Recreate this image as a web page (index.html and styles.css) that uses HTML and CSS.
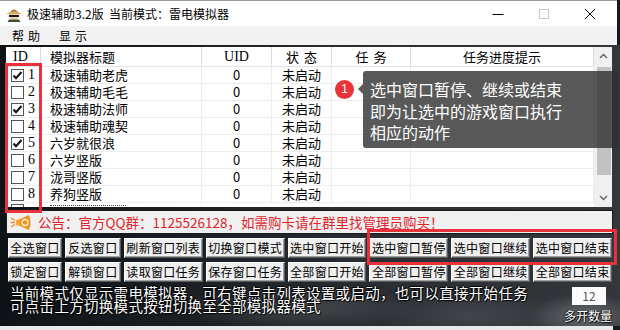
FILE: index.html
```html
<!DOCTYPE html>
<html lang="zh-CN">
<head>
<meta charset="utf-8">
<title>极速辅助3.2版</title>
<link rel="stylesheet" href="styles.css">
</head>
<body>
<div class="win">
  <div class="titlebar">
    <svg class="appicon" width="16" height="16" viewBox="0 0 16 16">
      <path d="M4 6.5 Q8 0 12 6.5 Z" fill="#a8803e"/>
      <path d="M0.5 7.5 Q8 3.5 15.5 7.5 L13 8.5 L3 8.5 Z" fill="#d2aa62"/>
      <rect x="4" y="8.5" width="8" height="5" fill="#f2d3a4"/>
      <rect x="3" y="9" width="10" height="2" fill="#151515"/>
      <path d="M3 13.5 L13 13.5 L14.5 16 L1.5 16 Z" fill="#3d5232"/>
    </svg>
    <span class="apptitle">极速辅助3.2版&nbsp;&nbsp;当前模式：雷电模拟器</span>
    <div class="ctrls">
      <span class="ctrl"><svg width="12" height="12" viewBox="0 0 12 12"><path d="M0.5 6.5 H11.5" stroke="#000" stroke-width="1"/></svg></span>
      <span class="ctrl"><svg width="12" height="12" viewBox="0 0 12 12"><rect x="1.5" y="1.5" width="9" height="9" fill="none" stroke="#c4c4c4" stroke-width="1"/></svg></span>
      <span class="ctrl"><svg width="12" height="12" viewBox="0 0 12 12"><path d="M1 1 L11 11 M11 1 L1 11" stroke="#000" stroke-width="1"/></svg></span>
    </div>
  </div>
  <div class="menubar">
    <span class="menuitem">帮助</span>
    <span class="menuitem">显示</span>
  </div>
  <div class="client">
    <div class="list">
      <div class="table">
        <div class="row head">
          <div class="cell c-id"><span class="ser">ID</span></div>
          <div class="cell c-title">模拟器标题</div>
          <div class="cell c-center ser">UID</div>
          <div class="cell c-center sp">状态</div>
          <div class="cell c-center sp">任务</div>
          <div class="cell c-center">任务进度提示</div>
        </div>
        <div class="row"><div class="cell c-id"><span class="cb on"><svg width="11" height="11" viewBox="0 0 11 11"><path d="M1.5 5.5 L4 8.2 L9.5 2" fill="none" stroke="#111" stroke-width="2"/></svg></span><span class="num">1</span></div><div class="cell c-title">极速辅助老虎</div><div class="cell c-center">0</div><div class="cell c-center">未启动</div><div class="cell"></div><div class="cell"></div></div>
        <div class="row"><div class="cell c-id"><span class="cb"></span><span class="num">2</span></div><div class="cell c-title">极速辅助毛毛</div><div class="cell c-center">0</div><div class="cell c-center">未启动</div><div class="cell"></div><div class="cell"></div></div>
        <div class="row"><div class="cell c-id"><span class="cb on"><svg width="11" height="11" viewBox="0 0 11 11"><path d="M1.5 5.5 L4 8.2 L9.5 2" fill="none" stroke="#111" stroke-width="2"/></svg></span><span class="num">3</span></div><div class="cell c-title">极速辅助法师</div><div class="cell c-center">0</div><div class="cell c-center">未启动</div><div class="cell"></div><div class="cell"></div></div>
        <div class="row"><div class="cell c-id"><span class="cb"></span><span class="num">4</span></div><div class="cell c-title">极速辅助魂契</div><div class="cell c-center">0</div><div class="cell c-center">未启动</div><div class="cell"></div><div class="cell"></div></div>
        <div class="row"><div class="cell c-id"><span class="cb on"><svg width="11" height="11" viewBox="0 0 11 11"><path d="M1.5 5.5 L4 8.2 L9.5 2" fill="none" stroke="#111" stroke-width="2"/></svg></span><span class="num">5</span></div><div class="cell c-title">六岁就很浪</div><div class="cell c-center">0</div><div class="cell c-center">未启动</div><div class="cell"></div><div class="cell"></div></div>
        <div class="row"><div class="cell c-id"><span class="cb"></span><span class="num">6</span></div><div class="cell c-title">六岁竖版</div><div class="cell c-center">0</div><div class="cell c-center">未启动</div><div class="cell"></div><div class="cell"></div></div>
        <div class="row"><div class="cell c-id"><span class="cb"></span><span class="num">7</span></div><div class="cell c-title">泷哥竖版</div><div class="cell c-center">0</div><div class="cell c-center">未启动</div><div class="cell"></div><div class="cell"></div></div>
        <div class="row"><div class="cell c-id"><span class="cb"></span><span class="num">8</span></div><div class="cell c-title">养狗竖版</div><div class="cell c-center">0</div><div class="cell c-center">未启动</div><div class="cell"></div><div class="cell"></div></div>
        <div class="row partial"><div class="cell c-id"><span class="cb"></span></div><div class="cell c-title"><span class="stub"></span></div><div class="cell"></div><div class="cell"></div><div class="cell"></div><div class="cell"></div></div>
      </div>
      <div class="vscroll">
        <div class="sarrow"><svg width="9" height="6" viewBox="0 0 9 6"><path d="M1 5 L4.5 1.5 L8 5" fill="none" stroke="#606060" stroke-width="1.4"/></svg></div>
        <div class="thumb"></div>
        <div class="strack"></div>
        <div class="sarrow"><svg width="9" height="6" viewBox="0 0 9 6"><path d="M1 1 L4.5 4.5 L8 1" fill="none" stroke="#606060" stroke-width="1.4"/></svg></div>
      </div>
    </div>
    <div class="notice">
      <svg class="horn" width="22" height="17" viewBox="0 0 22 17">
        <path d="M1 4 L5 6.5 M0.5 8.5 L5 8.5 M1 13 L5 10.5" stroke="#f08a1c" stroke-width="1.4"/>
        <path d="M9 5.5 L19 1 Q22 8.5 19 16 L9 11.5 Z" fill="#f2921e"/>
        <rect x="6" y="5.5" width="4" height="6" rx="1" fill="#f7a63a"/>
        <circle cx="15" cy="8.5" r="3" fill="none" stroke="#fff3d0" stroke-width="1.3"/>
      </svg>
      <span class="notice-text">公告：官方QQ群：1125526128，如需购卡请在群里找管理员购买！</span>
    </div>
    <div class="btns">
      <div class="btnrow">
        <button class="btn w-s">全选窗口</button>
        <button class="btn w-m">反选窗口</button>
        <button class="btn">刷新窗口列表</button>
        <button class="btn">切换窗口模式</button>
        <button class="btn">选中窗口开始</button>
        <button class="btn">选中窗口暂停</button>
        <button class="btn">选中窗口继续</button>
        <button class="btn">选中窗口结束</button>
      </div>
      <div class="btnrow">
        <button class="btn w-s">锁定窗口</button>
        <button class="btn w-m">解锁窗口</button>
        <button class="btn">读取窗口任务</button>
        <button class="btn">保存窗口任务</button>
        <button class="btn">全部窗口开始</button>
        <button class="btn">全部窗口暂停</button>
        <button class="btn">全部窗口继续</button>
        <button class="btn">全部窗口结束</button>
      </div>
    </div>
    <div class="footer">
      <div class="hint">
        <div>当前模式仅显示雷电模拟器，可右键点击列表设置或启动，也可以直接开始任务</div>
        <div>可点击上方切换模式按钮切换至全部模拟器模式</div>
      </div>
      <div class="multi">
        <div class="count">12</div>
        <div class="count-label">多开数量</div>
      </div>
    </div>
  </div>
  <div class="bottomstrip"></div>

  <div class="mark mark-id"></div>
  <div class="mark mark-btns"></div>
  <div class="tip-badge">1</div>
  <div class="tip">
    <div class="tip-arrow"></div>
    <div>选中窗口暂停、继续或结束</div>
    <div>即为让选中的游戏窗口执行</div>
    <div>相应的动作</div>
  </div>
</div>
</body>
</html>
```

FILE: styles.css
```css
* { box-sizing: border-box; }

body {
  margin: 0;
  width: 620px;
  height: 330px;
  overflow: hidden;
  background: #15181c;
  font-family: "Noto Sans CJK SC", "Noto Sans", sans-serif;
  color: #000;
}

.win {
  position: relative;
  width: 620px;
  height: 330px;
  display: flex;
  flex-direction: column;
}

/* title bar */
.titlebar {
  height: 26px;
  background: #fff;
  border-top: 1px solid #9a9a9a;
  display: flex;
  align-items: center;
  padding-left: 6px;
  padding-right: 4px;
  margin-right: 3px;
}
.appicon { flex: none; }
.apptitle {
  margin-left: 5px;
  font-size: 12px;
  line-height: 16px;
}
.ctrls {
  margin-left: auto;
  display: flex;
  height: 25px;
}
.ctrl {
  width: 46px;
  display: flex;
  align-items: center;
  justify-content: center;
}

/* menu */
.menubar {
  height: 19px;
  background: #f2f2f2;
  display: flex;
  align-items: center;
  padding-left: 12px;
  margin-right: 3px;
  gap: 15px;
}
.menuitem {
  font-size: 12px;
  letter-spacing: 4px;
  line-height: 16px;
}

/* client area */
.client {
  flex: 1;
  display: flex;
  flex-direction: column;
  padding: 2px 8px 0 6px;
  background:
    radial-gradient(ellipse 70px 30px at 585px 272px, rgba(150,154,158,.55), transparent 80%),
    radial-gradient(ellipse 150px 28px at 300px 262px, rgba(95,98,102,.55), transparent 80%),
    radial-gradient(ellipse 120px 30px at 470px 270px, rgba(80,84,88,.6), transparent 80%),
    linear-gradient(90deg, #0e1317 0%, #1b1f24 30%, #2a2d31 60%, #33363a 100%);
}

.list {
  height: 160px;
  display: flex;
  background: #fff;
  overflow: hidden;
}
.table {
  flex: 1;
  display: flex;
  flex-direction: column;
}
.row {
  display: grid;
  grid-template-columns: 35px 161px 70px 60px 79px 1fr;
  height: 17px;
  flex: none;
  border-bottom: 1px solid #ededed;
  font-size: 13px;
  line-height: 16px;
}
.row.head {
  height: 20px;
  border-bottom: 1px solid #e3e3e3;
}
.row.partial {
  height: 4px;
  border-bottom: 0;
  align-items: end;
}
.row.partial .cell { align-items: flex-end; overflow: hidden; }
.row.partial .cb { height: 3px; border-bottom: 0; }
.stub {
  display: block;
  width: 76px;
  height: 2px;
  border-top: 1px dotted #444;
}
.cell {
  border-right: 1px solid #ededed;
  display: flex;
  align-items: center;
  white-space: nowrap;
}
.head .cell { border-right-color: #dcdcdc; }
.c-id { padding-left: 5px; }
.head .c-id { padding-left: 7px; }
.c-title { padding-left: 9px; }
.c-center { justify-content: center; }
.sp { letter-spacing: 5px; padding-left: 5px; }
.ser { font-family: "Liberation Serif", "Noto Sans CJK SC", serif; font-size: 14px; }

.cb {
  width: 13px;
  height: 13px;
  border: 1.5px solid #555;
  background: #fff;
  display: flex;
  align-items: center;
  justify-content: center;
  flex: none;
}
.num {
  margin-left: 4px;
  font-family: "Liberation Serif", serif;
  font-size: 14px;
}

.vscroll {
  width: 18px;
  background: #f0f0f0;
  display: flex;
  flex-direction: column;
  align-items: center;
}
.sarrow {
  height: 18px;
  width: 18px;
  display: flex;
  align-items: center;
  justify-content: center;
  flex: none;
}
.thumb {
  margin-top: 2px;
  width: 14px;
  margin-left: 2px;
  height: 108px;
  background: #c2c2c2;
  flex: none;
}
.strack { flex: 1; }

/* notice */
.notice {
  margin-top: 3px;
  height: 24px;
  margin-right: -1px;
  background: #f0f0f0;
  border: 1px solid #1a1a1a;
  display: flex;
  align-items: center;
  padding-left: 3px;
}
.horn { flex: none; }
.notice-text {
  margin-left: 6px;
  color: #e0242c;
  font-size: 13.5px;
  line-height: 18px;
  white-space: nowrap;
}

/* buttons */
.btns {
  margin-top: 4px;
  display: flex;
  flex-direction: column;
  gap: 4px;
  padding-left: 2px;
}
.btnrow {
  display: flex;
  gap: 3px;
}
.btn {
  width: 79px;
  height: 20px;
  padding: 0;
  margin: 0;
  background: #efefef;
  border-top: 1px solid #fff;
  border-left: 1px solid #fff;
  border-right: 1px solid #5a5a5a;
  border-bottom: 1px solid #5a5a5a;
  box-shadow: inset -1px -1px 0 #a0a0a0;
  font-family: "Noto Sans CJK SC", sans-serif;
  font-size: 12px;
  letter-spacing: 0.3px;
  line-height: 16px;
  color: #000;
  white-space: nowrap;
}
.btn.w-s { width: 54px; }
.btn.w-m { width: 56px; }

/* footer */
.footer {
  flex: 1;
  display: flex;
  padding-top: 4px;
}
.hint {
  flex: 1;
  padding-left: 4px;
  color: #fff;
  font-size: 14.5px;
  line-height: 13px;
  letter-spacing: 0.3px;
  white-space: nowrap;
  text-shadow: 1px 1px 1px #000, -1px 0 1px #000, 0 -1px 1px #000;
}
.multi {
  width: 47px;
  display: flex;
  flex-direction: column;
  align-items: flex-end;
  padding-top: 1px;
}
.count {
  width: 34px;
  height: 18px;
  margin-right: 6px;
  background: #fbfbfb;
  color: #555;
  font-size: 12px;
  line-height: 18px;
  text-align: center;
}
.count-label {
  margin-top: 4px;
  color: #fff;
  font-size: 12px;
  line-height: 14px;
  white-space: nowrap;
  text-shadow: 1px 1px 1px #000, -1px 0 1px #000;
}

.bottomstrip {
  height: 4px;
  background: #e9e9e9;
  margin-right: 7px;
}

/* annotation overlays */
.mark {
  position: absolute;
  border: 3px solid #e8323b;
  pointer-events: none;
}
.mark-id { left: 5px; top: 63px; width: 37px; height: 150px; }
.mark-btns { left: 367px; top: 229px; width: 250px; height: 36px; }

.tip {
  position: absolute;
  left: 363px;
  top: 71px;
  width: 255px;
  height: 77px;
  border-radius: 3px;
  background: rgba(48,48,48,.8);
  color: #fff;
  font-size: 16px;
  line-height: 21.5px;
  padding: 8px 0 0 7px;
  white-space: nowrap;
}
.tip-arrow {
  position: absolute;
  left: -5px;
  top: 13px;
  width: 0;
  height: 0;
  border-top: 5px solid transparent;
  border-bottom: 5px solid transparent;
  border-right: 5px solid rgba(48,48,48,.8);
}
.tip-badge {
  position: absolute;
  left: 335px;
  top: 80px;
  width: 19px;
  height: 19px;
  border-radius: 50%;
  background: #ea3339;
  color: #fff;
  font-family: "Liberation Sans", sans-serif;
  font-size: 12px;
  line-height: 19px;
  text-align: center;
}
```
